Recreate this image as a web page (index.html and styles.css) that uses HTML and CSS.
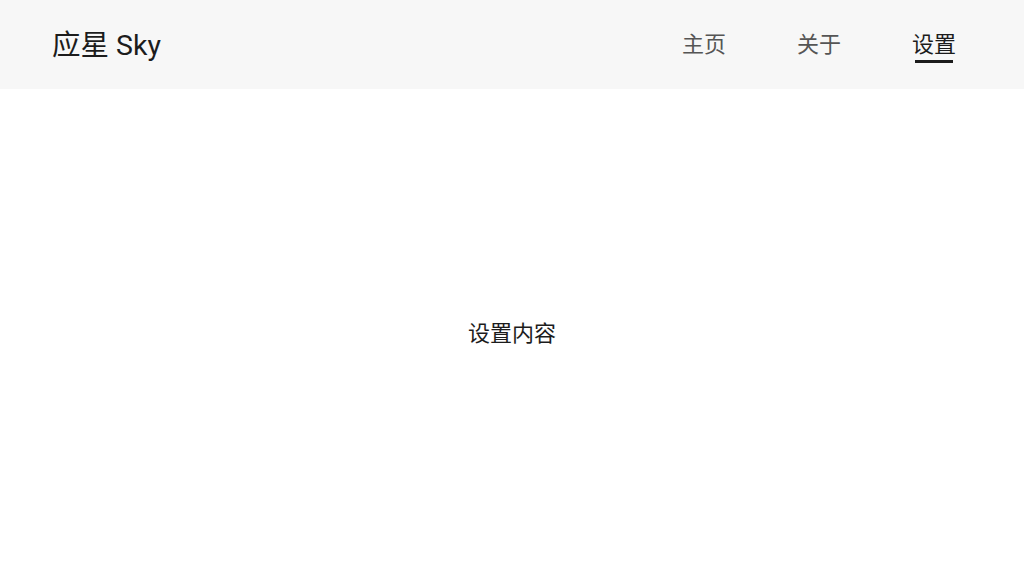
FILE: index.html
```html
<!DOCTYPE html>
<html lang="zh-CN">
<head>
<meta charset="utf-8">
<title>应星 Sky</title>
<link rel="stylesheet" href="styles.css">
</head>
<body>
<header class="topbar">
  <div class="brand">应星 Sky</div>
  <nav class="nav">
    <a class="nav-item">主页<span class="bar"></span></a>
    <a class="nav-item">关于<span class="bar"></span></a>
    <a class="nav-item active">设置<span class="bar"></span></a>
  </nav>
</header>
<main class="content">
  <p class="message">设置内容</p>
</main>
</body>
</html>
```
FILE: styles.css
```css
* { box-sizing: border-box; }
html, body { margin: 0; height: 100%; }
body {
  font-family: Roboto, "Noto Sans CJK SC", sans-serif;
  color: #222;
  background: #fff;
  display: flex;
  flex-direction: column;
}
.topbar {
  height: 89px;
  flex: none;
  background: #f7f7f7;
  display: flex;
  align-items: center;
  justify-content: space-between;
  padding: 0 68px 0 52px;
}
.brand {
  font-size: 28.5px;
  line-height: 1;
  color: #1c1c1c;
  padding-top: 4px;
}
.nav {
  display: flex;
  gap: 71px;
  align-items: flex-start;
}
.nav-item {
  display: flex;
  flex-direction: column;
  align-items: center;
  font-size: 22px;
  line-height: 30px;
  color: #555;
  padding-top: 4px;
}
.nav-item .bar {
  display: block;
  width: 38px;
  height: 3px;
  background: transparent;
}
.nav-item.active { color: #1c1c1c; }
.nav-item.active .bar { background: #1c1c1c; }
.content {
  flex: 1;
  display: flex;
  align-items: center;
  justify-content: center;
  padding-bottom: 3px;
}
.message {
  margin: 0;
  font-size: 22px;
  color: #1c1c1c;
}
```
